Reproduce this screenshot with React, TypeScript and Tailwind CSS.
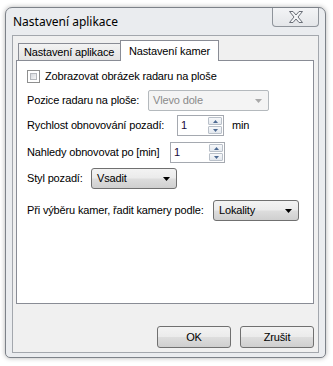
import React from 'react'

const btnBg = 'bg-[linear-gradient(#f3f3f3_0%,#ebebeb_48%,#dddddd_52%,#cfcfcf_100%)]'

function Arrow({ color = '#000' }: { color?: string }) {
  return (
    <svg width="7" height="4" viewBox="0 0 7 4">
      <path d="M0 0h7L3.5 4z" fill={color} />
    </svg>
  )
}

function Combo({ value, width, disabled }: { value: string; width: string; disabled?: boolean }) {
  if (disabled) {
    return (
      <div className={`flex h-[21px] ${width} items-center justify-between rounded-[2px] border border-[#b4b9bd] bg-[#f4f4f4] pl-[4px] pr-[6px] text-[#8a8a8a]`}>
        <span>{value}</span>
        <Arrow color="#a9a9a9" />
      </div>
    )
  }
  return (
    <div className={`flex h-[21px] ${width} items-center justify-between rounded-[3px] border border-[#707070] ${btnBg} pl-[5px] pr-[6px]`}>
      <span>{value}</span>
      <Arrow />
    </div>
  )
}

function Spin({ value, width }: { value: string; width: string }) {
  return (
    <div className={`flex h-[21px] ${width} items-stretch border border-[#a5a9b0] bg-white`}>
      <span className="flex-1 pl-[3px] leading-[19px] text-[#1a0a3a]">{value}</span>
      <div className="flex w-[15px] flex-col gap-[1px] py-[1px] pr-[1px]">
        <div className="flex flex-1 items-center justify-center rounded-[1px] border border-[#b9c0c9] bg-[linear-gradient(#f7f8fa,#e3e8ee)]">
          <svg width="5" height="3" viewBox="0 0 5 3"><path d="M0 3h5L2.5 0z" fill="#4d6a92" /></svg>
        </div>
        <div className="flex flex-1 items-center justify-center rounded-[1px] border border-[#b9c0c9] bg-[linear-gradient(#f7f8fa,#e3e8ee)]">
          <svg width="5" height="3" viewBox="0 0 5 3"><path d="M0 0h5L2.5 3z" fill="#4d6a92" /></svg>
        </div>
      </div>
    </div>
  )
}

function Button({ label }: { label: string }) {
  return (
    <div className={`flex h-[22px] w-[74px] items-center justify-center rounded-[3px] border border-[#707070] ${btnBg}`}>
      {label}
    </div>
  )
}

function CloseGlyph() {
  return (
    <svg width="14" height="12" viewBox="0 0 14 12">
      <path
        d="M0.5 0.5h3.5l3 3.5 3-3.5h3.5l-4.5 5.5 4.5 5.5h-3.5l-3-3.5-3 3.5h-3.5l4.5-5.5z"
        fill="#f4f5f7"
        stroke="#6a6f78"
        strokeWidth="1"
      />
    </svg>
  )
}

export default function App() {
  return (
    <div className="h-[366px] w-[333px] bg-white pl-[5px] pt-[7px] font-['Liberation_Sans',Arial,sans-serif] text-[11px] tracking-[-0.15px] text-black">
      <div className="flex h-[351px] w-[321px] flex-col rounded-t-[7px] rounded-b-[5px] border border-[#7d8289] bg-[#eaecef] px-[6px] pb-[4px] shadow-[0_0_5px_rgba(0,0,0,0.3)]">
        <div className="flex h-[27px] items-start justify-between">
          <span className="self-center pl-[1px] font-['Noto_Sans',sans-serif] text-[12px] leading-none tracking-normal">
            Nastavení aplikace
          </span>
          <div className="flex h-[19px] w-[47px] items-center justify-center rounded-b-[4px] border-x border-b border-[#8f949b] bg-[linear-gradient(#f3f4f6,#e4e6e9)]">
            <CloseGlyph />
          </div>
        </div>
        <div className="flex flex-1 flex-col border border-[#a3a7ad] bg-[#f0f0f0] pb-[4px] pl-[3px] pr-[4px] pt-[4px]">
          <div className="flex h-[264px] w-[298px] flex-col">
            <div className="flex h-[20px] items-end pl-[2px]">
              <div className="flex h-[17px] w-[102px] items-center border-l border-t border-[#898c95] bg-[linear-gradient(#f3f3f3,#e3e3e3)] pl-[5px]">
                Nastavení aplikace
              </div>
              <div className="relative z-10 -mb-[1px] flex h-[21px] w-[99px] items-start border-x border-t border-[#898c95] bg-white pl-[8px] pt-[2px]">
                Nastavení kamer
              </div>
            </div>
            <div className="flex flex-1 flex-col border border-[#898c95] bg-white pl-[10px]">
              <div className="mt-[9px] flex h-[13px] items-center gap-[5px]">
                <div className="h-[13px] w-[13px] border border-[#8e8f8f] bg-white p-[2px]">
                  <div className="h-full w-full border border-[#b5b8bd] bg-[linear-gradient(135deg,#d6d9de,#f6f6f6)]" />
                </div>
                <span>Zobrazovat obrázek radaru na ploše</span>
              </div>
              <div className="mt-[7px] flex h-[21px] items-center">
                <span className="w-[121px]">Pozice radaru na ploše:</span>
                <Combo value="Vlevo dole" width="w-[121px]" disabled />
              </div>
              <div className="mt-[4px] flex h-[21px] items-center">
                <span className="w-[150px]">Rychlost obnovování pozadí:</span>
                <Spin value="1" width="w-[47px]" />
                <span className="ml-[8px]">min</span>
              </div>
              <div className="mt-[6px] flex h-[21px] items-center">
                <span className="w-[143px]">Nahledy obnovovat po [min]</span>
                <Spin value="1" width="w-[55px]" />
              </div>
              <div className="mt-[5px] flex h-[21px] items-center">
                <span className="w-[64px]">Styl pozadí:</span>
                <Combo value="Vsadit" width="w-[86px]" />
              </div>
              <div className="mt-[11px] flex h-[21px] items-center">
                <span className="w-[186px]">Při výběru kamer, řadit kamery podle:</span>
                <Combo value="Lokality" width="w-[86px]" />
              </div>
            </div>
          </div>
          <div className="mt-[22px] flex justify-end gap-[9px]">
            <Button label="OK" />
            <Button label="Zrušit" />
          </div>
        </div>
      </div>
    </div>
  )
}
